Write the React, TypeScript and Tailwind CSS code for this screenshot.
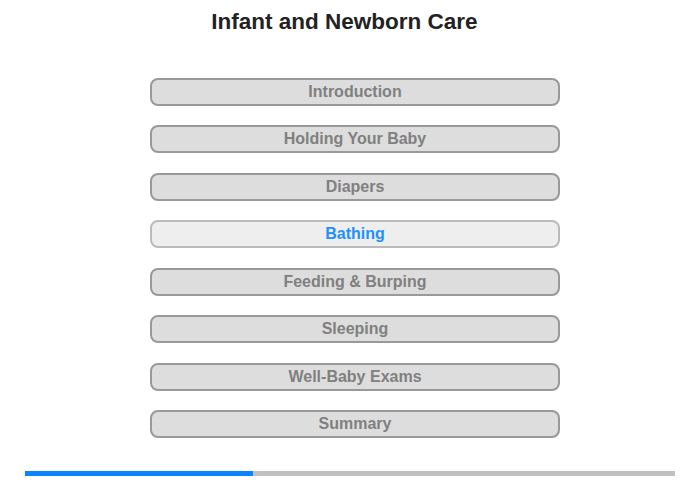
import React from "react";

const items = [
  "Introduction",
  "Holding Your Baby",
  "Diapers",
  "Bathing",
  "Feeding & Burping",
  "Sleeping",
  "Well-Baby Exams",
  "Summary",
];

export default function App() {
  return (
    <div
      className="w-[700px] h-[480px] bg-white flex flex-col items-center"
      style={{ fontFamily: '"Liberation Sans", Arial, sans-serif' }}
    >
      <h1 className="mt-[9px] mr-[11px] h-[26px] leading-[26px] text-[22.5px] font-bold text-[#222222]">
        Infant and Newborn Care
      </h1>
      <div className="mt-[43px] ml-[10px] flex flex-col">
        {items.map((t, i) => {
          const active = t === "Bathing";
          const gap = i === 0 ? "" : i % 2 === 1 ? "mt-[19px]" : "mt-[20px]";
          return (
            <div
              key={t}
              className={
                (active
                  ? "w-[410px] h-[28px] rounded-[8px] border-2 border-[#bbbbbb] bg-[#eeeeee] flex items-center justify-center text-[16px] font-bold text-[#1e90ff] "
                  : "w-[410px] h-[28px] rounded-[8px] border-2 border-[#999999] bg-[#dddddd] flex items-center justify-center text-[16px] font-bold text-[#808080] ") +
                gap
              }
            >
              {t}
            </div>
          );
        })}
      </div>
      <div className="mt-auto mb-[4px] w-[650px] h-[5px] bg-[#c0c0c0] flex">
        <div className="w-[228px] h-full bg-[#0a84ff]" />
      </div>
    </div>
  );
}
